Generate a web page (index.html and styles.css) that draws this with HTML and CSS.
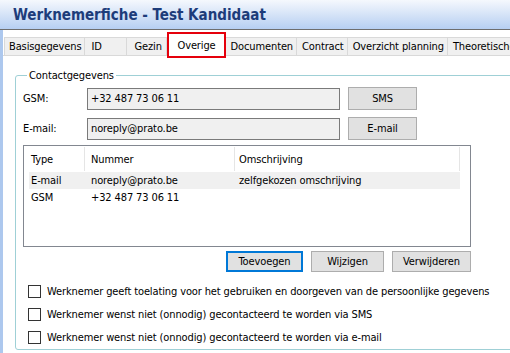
FILE: index.html
```html
<!DOCTYPE html>
<html lang="nl">

<head>
    <meta charset="UTF-8">
    <title>Werknemerfiche - Test Kandidaat</title>
    <link rel="stylesheet" href="styles.css">
</head>

<body>
    <header class="titlebar">
        <h1>Werknemerfiche - Test Kandidaat</h1>
    </header>

    <div class="window">
        <div class="tabs">
            <div class="tab tab-first">Basisgegevens</div>
            <div class="tab tab-id">ID</div>
            <div class="tab tab-gezin">Gezin</div>
            <div class="tab active">Overige</div>
            <div class="tab">Documenten</div>
            <div class="tab">Contract</div>
            <div class="tab">Overzicht planning</div>
            <div class="tab">Theoretische</div>
        </div>

        <div class="panel">
            <fieldset class="group">
                <legend>Contactgegevens</legend>

                <div class="contact-row">
                    <label for="gsm">GSM:</label>
                    <input type="text" id="gsm" value="+32 487 73 06 11" disabled>
                    <button class="btn">SMS</button>
                </div>
                <div class="contact-row">
                    <label for="email">E-mail:</label>
                    <input type="text" id="email" value="noreply@prato.be" disabled>
                    <button class="btn">E-mail</button>
                </div>

                <div class="listview">
                    <div class="lv-row lv-head">
                        <div class="col-type">Type</div>
                        <div class="col-num">Nummer</div>
                        <div class="col-desc">Omschrijving</div>
                    </div>
                    <div class="lv-row selected">
                        <div class="col-type">E-mail</div>
                        <div class="col-num">noreply@prato.be</div>
                        <div class="col-desc">zelfgekozen omschrijving</div>
                    </div>
                    <div class="lv-row">
                        <div class="col-type">GSM</div>
                        <div class="col-num">+32 487 73 06 11</div>
                        <div class="col-desc"></div>
                    </div>
                </div>

                <div class="actions">
                    <button class="btn btn-default btn-add">Toevoegen</button>
                    <button class="btn btn-edit">Wijzigen</button>
                    <button class="btn btn-del">Verwijderen</button>
                </div>

                <label class="check"><span class="box"></span>Werknemer geeft toelating voor het gebruiken en doorgeven van de persoonlijke gegevens</label>
                <label class="check"><span class="box"></span>Werknemer wenst niet (onnodig) gecontacteerd te worden via SMS</label>
                <label class="check"><span class="box"></span>Werknemer wenst niet (onnodig) gecontacteerd te worden via e-mail</label>
            </fieldset>
        </div>
    </div>
</body>

</html>
```

FILE: styles.css
```css
* {
    box-sizing: border-box;
}

body {
    margin: 0;
    font-family: "DejaVu Sans Condensed", "DejaVu Sans", sans-serif;
    font-size: 11px;
    letter-spacing: -0.12px;
    color: #000;
    background: #fff;
    overflow: hidden;
}

.titlebar {
    height: 30px;
    background: linear-gradient(#f5f8fd, #b6cff2);
    border-bottom: 1px solid #6e6e6e;
    padding: 0 13px;
    display: flex;
    align-items: center;
}

.titlebar h1 {
    margin: 0;
    font-size: 15px;
    font-weight: bold;
    letter-spacing: 0;
    color: #1d3c7a;
}

.window {
    border-left: 3px solid #adc8ee;
    height: 323px;
    padding-top: 7px;
}

.tabs {
    display: flex;
    align-items: flex-start;
    padding-left: 1px;
    height: 19px;
    border-bottom: 1px solid #d9d9d9;
}

.tab {
    flex-shrink: 0;
    height: 19px;
    padding: 0 3px 0 5px;
    background: #f0f0f0;
    border: 1px solid #d9d9d9;
    border-left: none;
    display: flex;
    align-items: center;
    white-space: nowrap;
}

.tab-first {
    border-left: 1px solid #d9d9d9;
    padding: 0 3px 0 4px;
}

.tab-id {
    min-width: 42px;
    padding-left: 6px;
}

.tab-gezin {
    min-width: 40px;
    padding-left: 7px;
}

.tab.active {
    height: 26px;
    margin-top: -5px;
    padding: 0 8px;
    background: #fff;
    border: 2px solid #e5000c;
}

.panel {
    padding: 13px 0 0 12px;
}

.group {
    margin: 0;
    width: 520px;
    height: 281px;
    padding: 5px 0 0 7px;
    border: 1px solid #9fd0d6;
    border-radius: 3px;
}

.group legend {
    padding: 0 2px;
    margin-left: 4px;
    line-height: 13px;
}

.contact-row {
    display: flex;
    align-items: center;
    height: 23px;
    margin-bottom: 7px;
}

.contact-row label {
    width: 64px;
}

.contact-row input {
    width: 253px;
    height: 22px;
    margin-right: 8px;
    padding: 0 3px;
    border: 1px solid #7a7a7a;
    background: #f0f0f0;
    color: #000;
    font: inherit;
    letter-spacing: inherit;
}

.btn {
    height: 23px;
    padding: 0;
    background: #e1e1e1;
    border: 1px solid #adadad;
    color: #000;
    font: inherit;
    letter-spacing: inherit;
}

.contact-row .btn {
    width: 69px;
}

.listview {
    width: 448px;
    height: 102px;
    margin-top: -2px;
    border: 1px solid #828790;
    padding: 1px 10px 0 5px;
}

.lv-row {
    display: flex;
    height: 17px;
    align-items: center;
}

.lv-head {
    height: 24px;
    margin-bottom: 1px;
}

.lv-head > div {
    height: 24px;
    display: flex;
    align-items: center;
    border-right: 1px solid #e5e5e5;
}

.lv-row.selected {
    background: #f0f0f0;
}

.col-type {
    width: 56px;
    padding-left: 2px;
}

.col-num {
    width: 150px;
    padding-left: 6px;
}

.col-desc {
    flex: 1;
    padding-left: 4px;
}

.actions {
    display: flex;
    justify-content: flex-end;
    width: 448px;
    margin-top: 4px;
    margin-bottom: 13px;
}

.actions .btn {
    height: 21px;
    margin-left: 8px;
}

.btn-default {
    border: 2px solid #0078d7;
}

.btn-add {
    width: 77px;
}

.btn-edit {
    width: 73px;
}

.btn-del {
    width: 79px;
}

.check {
    display: flex;
    align-items: center;
    height: 13px;
    margin: 0 0 10px 5px;
}

.box {
    width: 13px;
    height: 13px;
    border: 1px solid #333;
    background: #fff;
    margin-right: 6px;
}
```
